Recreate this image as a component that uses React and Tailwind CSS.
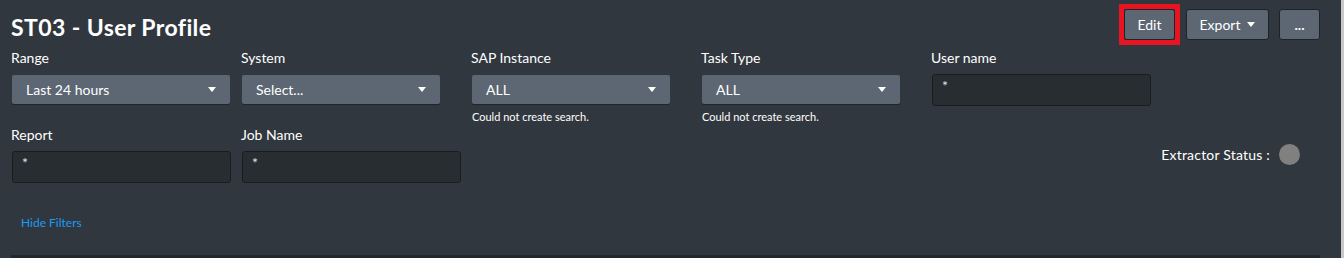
import React from 'react';

const Caret = ({ className = '' }) => (
  <svg width="8" height="5" viewBox="0 0 8 5" className={className}>
    <path d="M0 0 L8 0 L4 5 Z" fill="#ffffff" />
  </svg>
);

const Dropdown = ({ label, value, width, hint }) => (
  <div className="w-[230px] shrink-0 pl-[12px]">
    <div className="text-[14px] leading-[20px] text-white -ml-[1px]">{label}</div>
    <div
      className="mt-[7px] h-[29px] rounded-[2px] bg-[#5c6773] shadow-[0_1px_0_#20252a] flex items-center justify-between pl-[14px] pr-[14px]"
      style={{ width }}
    >
      <span className="text-[14px] text-white">{value}</span>
      <Caret />
    </div>
    {hint && <div className="mt-[6px] text-[11px] leading-[14px] text-white">{hint}</div>}
  </div>
);

const TextField = ({ label }) => (
  <div className="w-[230px] shrink-0 pl-[12px]">
    <div className="text-[14px] leading-[20px] text-white -ml-[1px]">{label}</div>
    <div className="mt-[6px] w-[219px] h-[32px] rounded-[3px] bg-[#272d31] border border-[#191c1f] flex items-center pl-[9px]">
      <span className="text-[14px] text-[#dfe6ee] -mt-[10px]">*</span>
    </div>
  </div>
);

const Button = ({ children, className = '' }) => (
  <div
    className={`h-[31px] rounded-[3px] bg-[#5c6773] border border-[#1e2328] flex items-center justify-center text-[14px] text-white ${className}`}
  >
    {children}
  </div>
);

export default function App() {
  return (
    <div className="w-[1344px] h-[258px] flex bg-[#c8c8c8] overflow-hidden">
      <div className="w-[1341px] h-full bg-[#31373e] flex flex-col font-['Lato','Open_Sans',sans-serif]">
        {/* Header */}
        <div className="flex items-start justify-between h-[48px]">
          <h1 className="pl-[11px] pt-[13px] text-[23px] leading-[28px] font-bold tracking-[0.4px] text-white">
            ST03 - User Profile
          </h1>
          <div className="flex items-center mt-[9px] mr-[21px]">
            <div className="border-[5px] border-[#e8141f] -m-[5px]">
              <Button className="w-[51px]">Edit</Button>
            </div>
            <Button className="w-[83px] ml-[11px] gap-[7px]">
              Export
              <Caret />
            </Button>
            <Button className="w-[41px] ml-[10px] font-bold">...</Button>
          </div>
        </div>

        {/* Filter row 1 */}
        <div className="flex h-[77px]">
          <Dropdown label="Range" value="Last 24 hours" width={218} />
          <Dropdown label="System" value="Select..." width={198} />
          <Dropdown label="SAP Instance" value="ALL" width={198} hint="Could not create search." />
          <Dropdown label="Task Type" value="ALL" width={198} hint="Could not create search." />
          <TextField label="User name" />
        </div>

        {/* Filter row 2 */}
        <div className="flex h-[84px]">
          <TextField label="Report" />
          <TextField label="Job Name" />
          <div className="ml-auto mr-[41px] mt-[19px] flex items-center gap-[9px] h-[21px]">
            <span className="text-[14px] tracking-[0.2px] text-white">Extractor Status :</span>
            <span className="w-[21px] h-[21px] rounded-full bg-[#808080]" />
          </div>
        </div>

        {/* Hide filters */}
        <div className="pl-[21px] h-[46px]">
          <span className="text-[12px] leading-[16px] text-[#1a9cf0]">Hide Filters</span>
        </div>

        <div className="ml-[11px] w-[1309px] h-[3px] bg-[#22272b]" />
      </div>
    </div>
  );
}
